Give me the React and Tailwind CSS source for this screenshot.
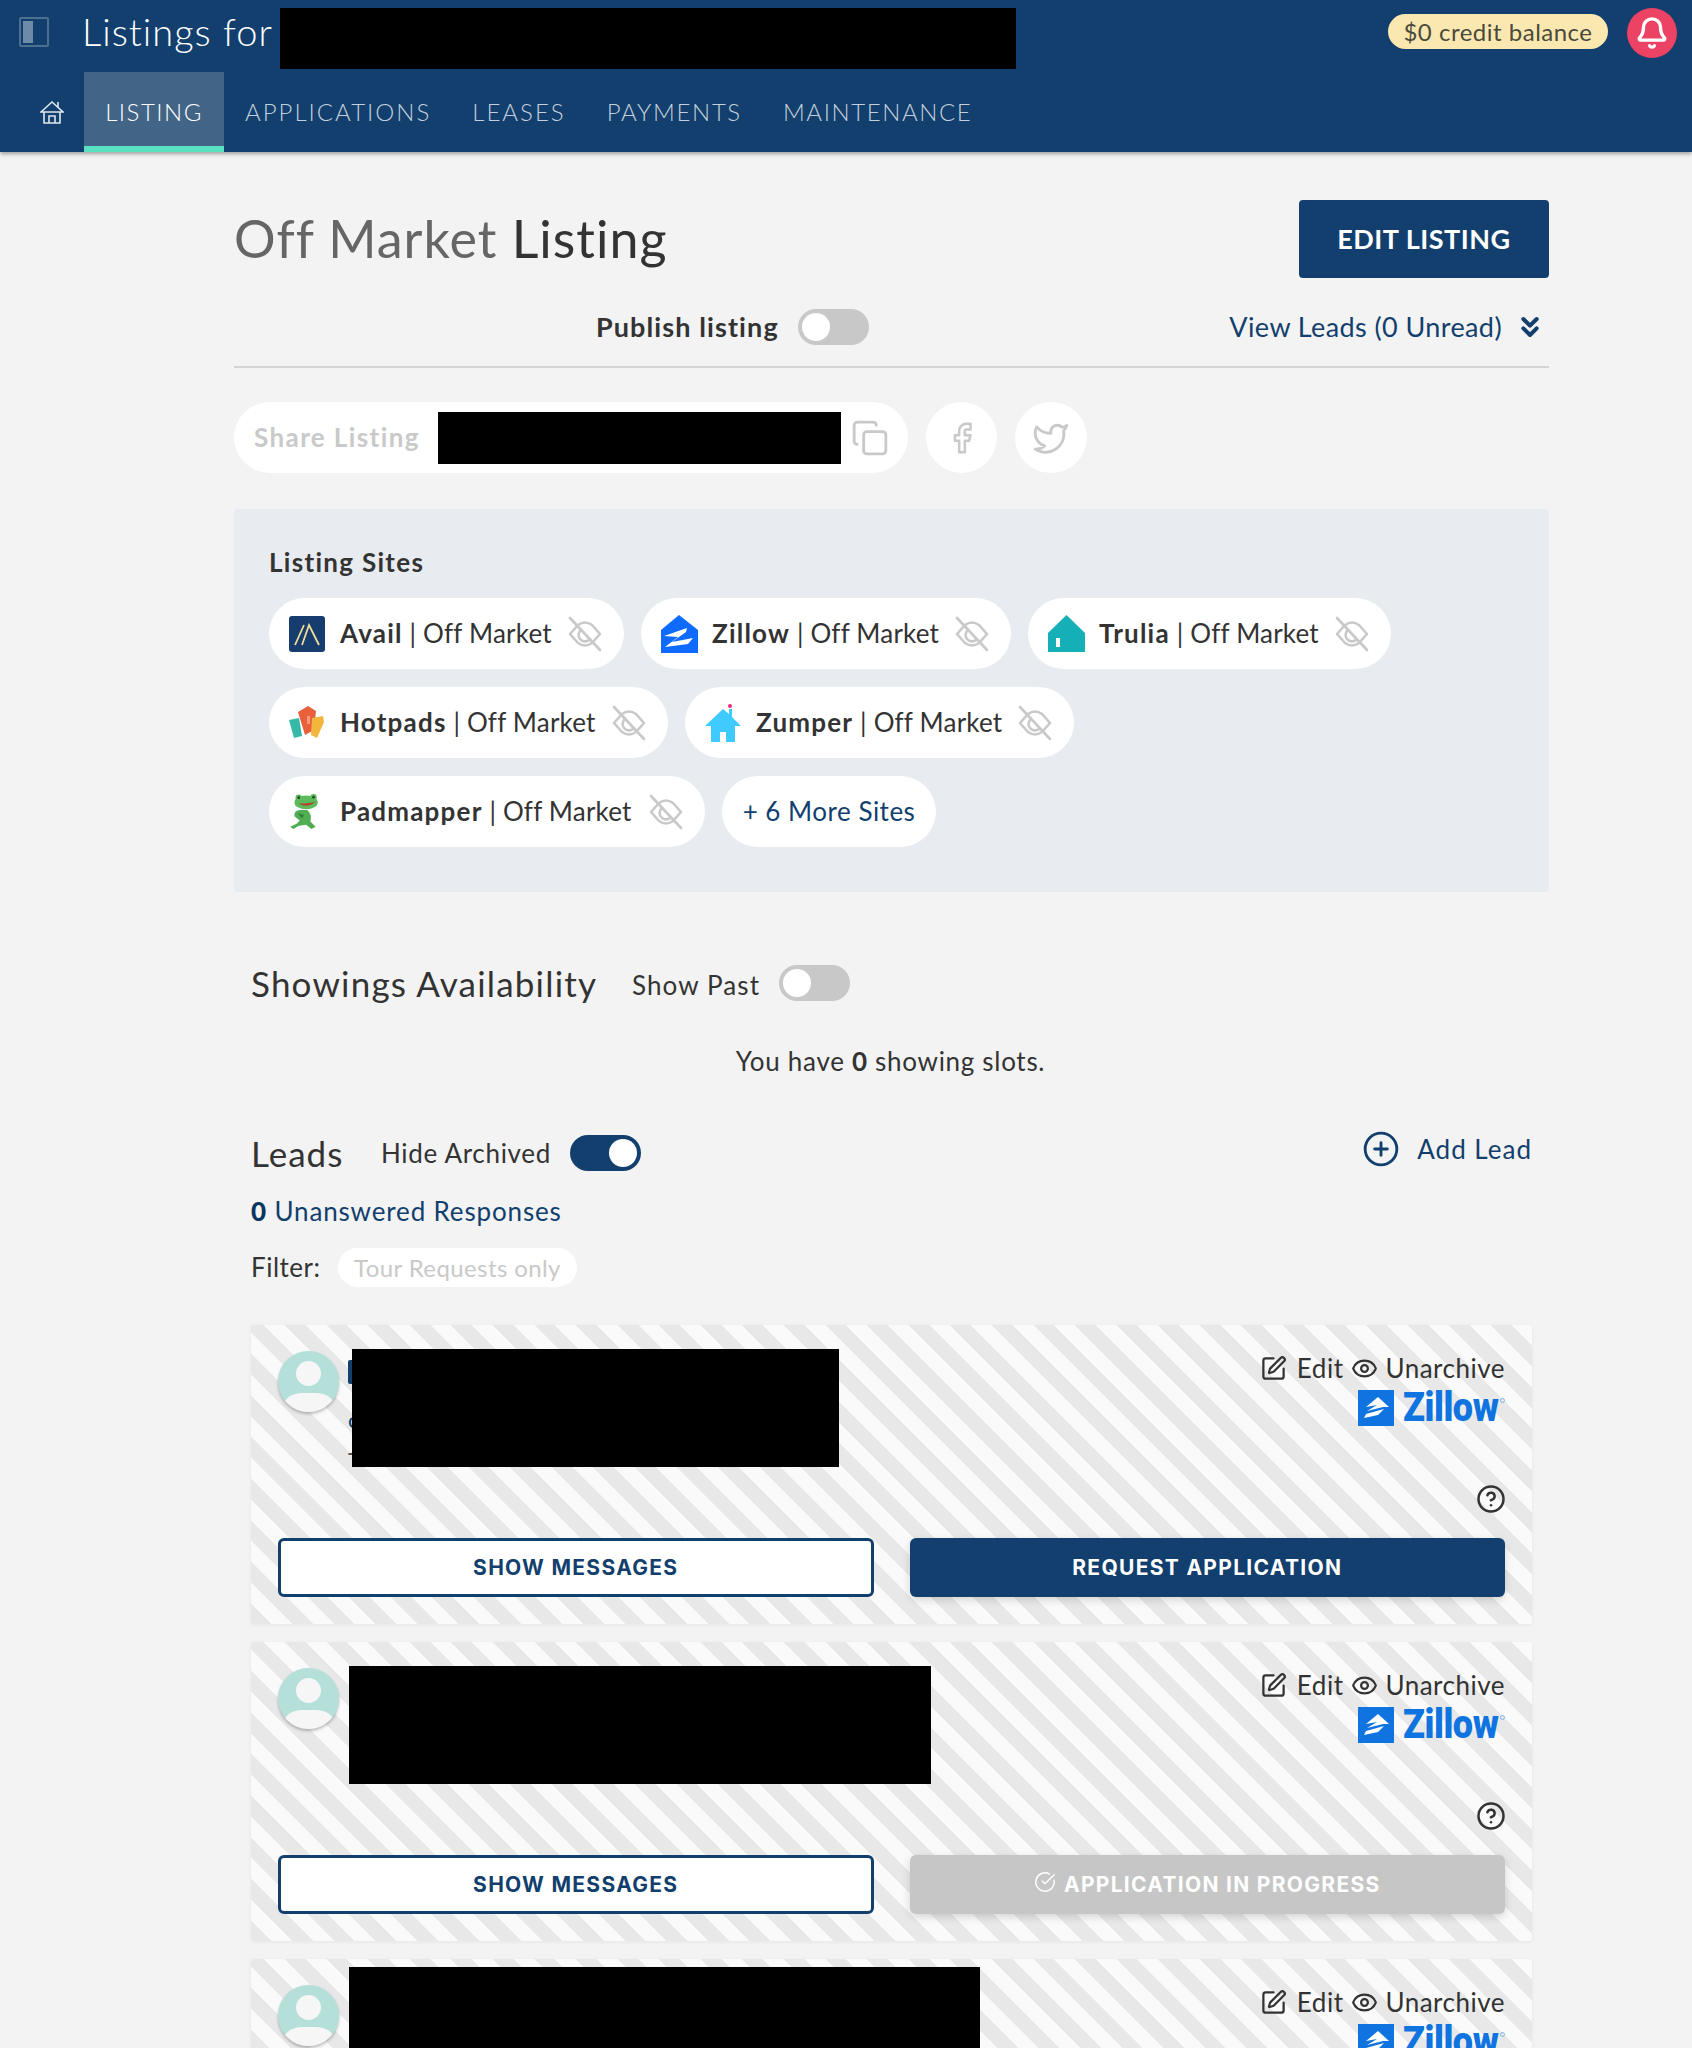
import React from "react";
import { Bell, ChevronsDown, Copy, Facebook, Twitter, CirclePlus, CircleHelp, SquarePen, Eye, CircleCheckBig } from "lucide-react";

const EyeOff = () => (
  <svg width="34" height="36" viewBox="0 0 34 36" fill="none" stroke="#c9c9c9" strokeWidth="2.6" strokeLinecap="round" strokeLinejoin="round" className="shrink-0">
    <path d="M2 18 L10 9 Q17 4 24 9 L32 18 L24 27 Q17 32 10 27 Z" />
    <path d="M13 14 A6 6 0 0 0 21 24" />
    <path d="M2 2 L32 34" />
  </svg>
);

const AvailLogo = () => (
  <svg width="36" height="36" viewBox="0 0 36 36" className="shrink-0">
    <rect width="36" height="36" rx="3" fill="#163d6e" />
    <path d="M6 29 L15 9 M13 29 L20 9 L30 29" stroke="#f0dc9c" strokeWidth="1.8" fill="none" />
  </svg>
);
const ZillowLogo = () => (
  <svg width="37" height="38" viewBox="0 0 37 38" className="shrink-0">
    <path d="M18 0 L37 15 V38 H0 V15 Z" fill="#0f6bff" />
    <path d="M3 21 L26 13 L25 17 L11 27 L32 23 L27 29 L4 32 L17 22 Z" fill="#fff" />
  </svg>
);
const TruliaLogo = () => (
  <svg width="37" height="37" viewBox="0 0 37 37" className="shrink-0">
    <path d="M18.5 0 L37 18 V37 H0 V18 Z" fill="#14afb7" />
    <rect x="8" y="23" width="4" height="9" fill="#fff" />
  </svg>
);
const HotpadsLogo = () => (
  <svg width="36" height="34" viewBox="0 0 36 34" className="shrink-0">
    <path d="M0 14 L10 12 L13 30 L5 32 Z" fill="#36b8a8" />
    <path d="M9 6 L19 0 L27 5 L25 24 L16 29 Z" fill="#e8603c" />
    <path d="M23 12 L34 10 L35 16 L28 32 L22 29 Z" fill="#f3b63c" />
    <rect x="18" y="10" width="3" height="8" fill="#f59a7c" />
  </svg>
);
const ZumperLogo = () => (
  <svg width="36" height="38" viewBox="0 0 36 38" className="shrink-0">
    <path d="M18 5 L24 10 V5 H27 V13 L36 22 H30 V38 H21 V28 H15 V38 H6 V22 H0 Z" fill="#3fcbff" />
    <circle cx="25" cy="2" r="2" fill="#f0287c" />
  </svg>
);
const FrogLogo = () => (
  <svg width="30" height="36" viewBox="0 0 28 34" className="shrink-0">
    <path d="M5 21 Q4 16 10 15 L17 15 Q22 19 20 26 L25 31 L21 33 L16 29 L9 30 L4 33 L1 31 L7 28 L10 25 Z" fill="#4fae52" />
    <ellipse cx="16" cy="8" rx="11" ry="6.5" fill="#5cbc5c" />
    <circle cx="9" cy="3.5" r="3" fill="#5cbc5c" />
    <circle cx="23" cy="3" r="3" fill="#5cbc5c" />
    <circle cx="9" cy="3.5" r="1.3" fill="#23452a" />
    <circle cx="23" cy="3" r="1.3" fill="#23452a" />
    <path d="M9 9 Q17 14 25 7 Q20 9 9 9 Z" fill="#b8412f" />
    <path d="M8 18 L14 20 L12 23 Z" fill="#2f7f3a" />
  </svg>
);

const Toggle = ({ on }) => (
  <div className={`w-[71px] h-[36px] rounded-full flex items-center px-[4px] shrink-0 ${on ? "bg-[#123f6d] justify-end" : "bg-[#c8c8c8] justify-start"}`}>
    <div className="w-[28px] h-[28px] rounded-full bg-white" />
  </div>
);

const Site = ({ logo, name, w }) => (
  <div className={`h-[71px] rounded-full bg-white flex items-center pl-[20px] pr-[22px] text-[26px] text-[#333] tracking-[0.2px] whitespace-nowrap ${w}`}>
    <span className="w-[51px] shrink-0 flex">{logo}</span>
    <span><b className="font-bold tracking-[1.2px]">{name}</b> | Off Market</span>
    <span className="ml-auto"><EyeOff /></span>
  </div>
);

const LeadCard = ({ black, slivers, progress, noActions }) => (
  <div className="h-[299px] shrink-0 rounded-[3px] shadow-[0_1px_4px_rgba(0,0,0,0.06)] px-[27px] flex flex-col bg-[repeating-linear-gradient(45deg,#e8e8e8,#e8e8e8_14.7px,#fafafa_14.7px,#fafafa_29.4px)]">
    <div className="h-[213px] flex justify-between shrink-0">
      <div className="flex items-start">
        <div className="relative w-[61px] h-[61px] rounded-full overflow-hidden bg-[#b5e0da] shadow-[0_2px_3px_rgba(0,0,0,0.25)] mt-[26px] shrink-0">
          <div className="w-[25px] h-[25px] rounded-full bg-[#f6f6f6] mx-auto mt-[10px]" />
          <div className="w-[56px] h-[40px] rounded-full bg-[#f6f6f6] mx-auto mt-[7px]" />
        </div>
        <div className="relative">
          {slivers && <div className="absolute left-[9px] top-[35px] w-[6px] h-[24px] rounded-[2px] bg-[#123f6d]" />}
          {slivers && <span className="absolute left-[9px] top-[78px] text-[22px] text-[#123f6d]">c</span>}
          {slivers && <span className="absolute left-[9px] top-[105px] text-[22px] text-[#555]">J</span>}
          <div className={`relative bg-black ${black}`} />
        </div>
      </div>
      <div className="flex flex-col items-end text-[#333] mr-0">
        <div className="flex items-center mt-[27px] text-[26px] leading-[32px] tracking-[0.5px]">
          <SquarePen size={27} strokeWidth={2} className="mr-[10px]" />
          <span>Edit</span>
          <Eye size={27} strokeWidth={2} className="ml-[8px] mr-[7px]" />
          <span>Unarchive</span>
        </div>
        <div className="flex items-center h-[36px] mt-[6px]">
          <div className="w-[36px] h-[36px] bg-[#0f74e0] flex items-center justify-center">
            <svg width="28" height="24" viewBox="0 0 28 24"><path d="M16 1 L27 11 H21 L5 15 L15 9 L4 11 Z M4 18 L22 13 L16 19 L2 22 Z" fill="#fff" /></svg>
          </div>
          <span className="ml-[9px] text-[40px] leading-[36px] font-black text-[#0f74e0] font-['Roboto',sans-serif] tracking-[-0.5px] scale-x-[0.9] origin-left w-[97px]">Zillow</span>
          <span className="w-[5px] h-[5px] rounded-full border border-[#7fb4ea] self-start mt-[8px]" />
        </div>
        <CircleHelp size={30} strokeWidth={2} className="mt-auto mb-[24px] mr-[-1px]" />
      </div>
    </div>
    {!noActions && (
      <div className="grid grid-cols-2 gap-[36px] font-['Inter',sans-serif] font-bold text-[21px] tracking-[1.3px]">
        <div className="h-[59px] rounded-[6px] border-[3px] border-[#123f6d] bg-white text-[#123f6d] flex items-center justify-center">SHOW MESSAGES</div>
        {progress ? (
          <div className="h-[59px] rounded-[6px] bg-[#c6c6c6] text-white flex items-center justify-center shadow-[0_3px_8px_rgba(0,0,0,0.15)]">
            <CircleCheckBig size={22} strokeWidth={1.6} className="mr-[8px] -mt-[5px]" />APPLICATION IN PROGRESS
          </div>
        ) : (
          <div className="h-[59px] rounded-[6px] bg-[#123f6d] text-white flex items-center justify-center shadow-[0_3px_8px_rgba(0,0,0,0.15)]">REQUEST APPLICATION</div>
        )}
      </div>
    )}
  </div>
);

export default function App() {
  return (
    <div className="h-[2048px] overflow-hidden bg-[#f3f3f3] font-['Lato',sans-serif] text-[#333]">
      <header className="h-[152px] bg-[#123f6d] shadow-[0_2px_4px_rgba(0,0,0,0.35)] text-white relative">
        <div className="h-[72px] flex items-start">
          <div className="ml-[19px] mt-[17px] w-[30px] h-[30px] rounded-[2px] border-2 border-[#4c6f92] p-[2px] shrink-0">
            <div className="w-[10px] h-full bg-[#6d8aa8]" />
          </div>
          <div className="ml-[33px] mt-[7px] text-[38px] leading-[48px] font-light tracking-[1px] whitespace-nowrap w-[198px]">Listings for</div>
          <div className="mt-[8px] w-[736px] h-[61px] bg-black shrink-0" />
          <div className="ml-auto mt-[14px] h-[35px] w-[220px] rounded-full bg-[#fbe8b0] text-[#4a4a3c] text-[24px] leading-[35px] text-center tracking-[0.5px]">$0 credit balance</div>
          <div className="ml-[19px] mr-[15px] mt-[8px] w-[50px] h-[50px] rounded-full bg-[#ec4263] flex items-center justify-center shrink-0">
            <Bell size={34} strokeWidth={2.4} />
          </div>
        </div>
        <nav className="h-[80px] flex text-[24px] tracking-[2px] font-light">
          <div className="ml-[40px] w-[44px] flex items-center">
            <svg width="24" height="26" viewBox="0 0 24 26" fill="none" stroke="#dfe6ee" strokeWidth="1.6"><path d="M1 13 L12 3 L23 13 H1 Z M4 13 V24 H20 V13 M9 24 V17 H15 V24 M18 8 V3" /></svg>
          </div>
          <div className="w-[140px] bg-[#426587] border-b-[6px] border-[#58e0c0] flex items-center justify-center pt-[6px] text-white tracking-[1.5px]">LISTING</div>
          <div className="flex items-center text-[#c3cfdc] gap-[41px] ml-[21px]">
            <span>APPLICATIONS</span>
            <span>LEASES</span>
            <span className="tracking-[1.7px]">PAYMENTS</span>
            <span className="tracking-[1.6px]">MAINTENANCE</span>
          </div>
        </nav>
      </header>

      <main className="ml-[234px] w-[1315px]">
        <div className="flex justify-between items-start pt-[48px]">
          <h1 className="text-[52px] leading-[76px] tracking-[1px] text-[#333]"><span className="text-[#666]">Off Market</span> Listing</h1>
          <button className="w-[250px] h-[78px] rounded-[4px] bg-[#123f6d] text-white text-[27px] font-bold tracking-[0.5px]">EDIT LISTING</button>
        </div>
        <div className="h-[90px] border-b-2 border-[#d4d4d4] flex items-start pt-[31px]">
          <span className="ml-[362px] text-[27px] font-bold leading-[36px] tracking-[1.1px] whitespace-nowrap w-[202px]">Publish listing</span>
          <Toggle />
          <span className="ml-auto text-[27px] leading-[36px] text-[#123f6d] tracking-[0.4px]">View Leads (0 Unread)</span>
          <ChevronsDown size={32} strokeWidth={3} className="ml-[12px] mr-[3px] mt-[2px] text-[#123f6d]" />
        </div>

        <div className="flex mt-[34px] gap-[18px]">
          <div className="w-[674px] h-[71px] rounded-full bg-white flex items-center pl-[20px]">
            <span className="w-[184px] text-[26px] font-bold text-[#c9c9c9] tracking-[1.4px] whitespace-nowrap">Share Listing</span>
            <div className="w-[403px] h-[52px] bg-black" />
            <Copy size={38} strokeWidth={1.8} className="ml-[10px] text-[#c9c9c9]" />
          </div>
          <div className="w-[71px] h-[71px] rounded-full bg-white flex items-center justify-center"><Facebook size={34} strokeWidth={1.8} className="text-[#c9c9c9]" /></div>
          <div className="w-[72px] h-[71px] rounded-full bg-white flex items-center justify-center"><Twitter size={38} strokeWidth={1.8} className="text-[#c9c9c9]" /></div>
        </div>

        <section className="mt-[36px] h-[383px] rounded-[4px] bg-[#e8ebf0] px-[35px] pt-[34px]">
          <h2 className="text-[26px] font-bold leading-[38px] tracking-[1.3px]">Listing Sites</h2>
          <div className="flex flex-col gap-[18px] mt-[17px]">
            <div className="flex gap-[17px]">
              <Site logo={<AvailLogo />} name="Avail" w="w-[355px]" />
              <Site logo={<ZillowLogo />} name="Zillow" w="w-[370px]" />
              <Site logo={<TruliaLogo />} name="Trulia" w="w-[363px]" />
            </div>
            <div className="flex gap-[17px]">
              <Site logo={<HotpadsLogo />} name="Hotpads" w="w-[399px]" />
              <Site logo={<ZumperLogo />} name="Zumper" w="w-[389px]" />
            </div>
            <div className="flex gap-[17px]">
              <Site logo={<FrogLogo />} name="Padmapper" w="w-[436px]" />
              <div className="w-[214px] h-[71px] rounded-full bg-white flex items-center justify-center text-[26px] text-[#123f6d] tracking-[0.5px]">+ 6 More Sites</div>
            </div>
          </div>
        </section>

        <div className="px-[17px]">
          <div className="flex items-start mt-[73px]">
            <h2 className="text-[35px] leading-[44px] tracking-[1.2px] w-[381px] -mt-[4px] whitespace-nowrap">Showings Availability</h2>
            <span className="text-[26px] leading-[36px] tracking-[1.1px] w-[147px] mt-[2px] whitespace-nowrap">Show Past</span>
            <Toggle />
          </div>
          <p className="text-center text-[26px] leading-[36px] tracking-[0.7px] mt-[38px] mr-[2px]">You have <b>0</b> showing slots.</p>

          <div className="flex items-start mt-[56px]">
            <h2 className="text-[35px] leading-[44px] tracking-[1px] w-[130px] -mt-[4px]">Leads</h2>
            <span className="text-[26px] leading-[36px] tracking-[0.7px] w-[189px] whitespace-nowrap">Hide Archived</span>
            <Toggle on />
            <div className="ml-auto flex items-center text-[#123f6d] -mt-[5px]">
              <CirclePlus size={38} strokeWidth={1.8} />
              <span className="ml-[17px] text-[26px] leading-[36px] tracking-[1px] whitespace-nowrap">Add Lead</span>
            </div>
          </div>
          <p className="text-[26px] leading-[36px] text-[#123f6d] tracking-[0.85px] mt-[18px]"><b className="font-black text-[#0c3560]">0</b> Unanswered Responses</p>
          <div className="flex items-center mt-[19px]">
            <span className="text-[26px] tracking-[0.5px] w-[87px]">Filter:</span>
            <div className="w-[239px] h-[39px] rounded-full bg-white text-[#c9c9c9] text-[24px] leading-[39px] text-center tracking-[0.4px]">Tour Requests only</div>
          </div>

          <div className="flex flex-col gap-[18px] mt-[38px]">
            <LeadCard black="w-[487px] h-[118px] mt-[24px] ml-[13px]" slivers />
            <LeadCard black="w-[582px] h-[118px] mt-[24px] ml-[10px]" progress />
            <LeadCard black="w-[631px] h-[118px] mt-[8px] ml-[10px]" noActions />
          </div>
        </div>
      </main>
    </div>
  );
}
